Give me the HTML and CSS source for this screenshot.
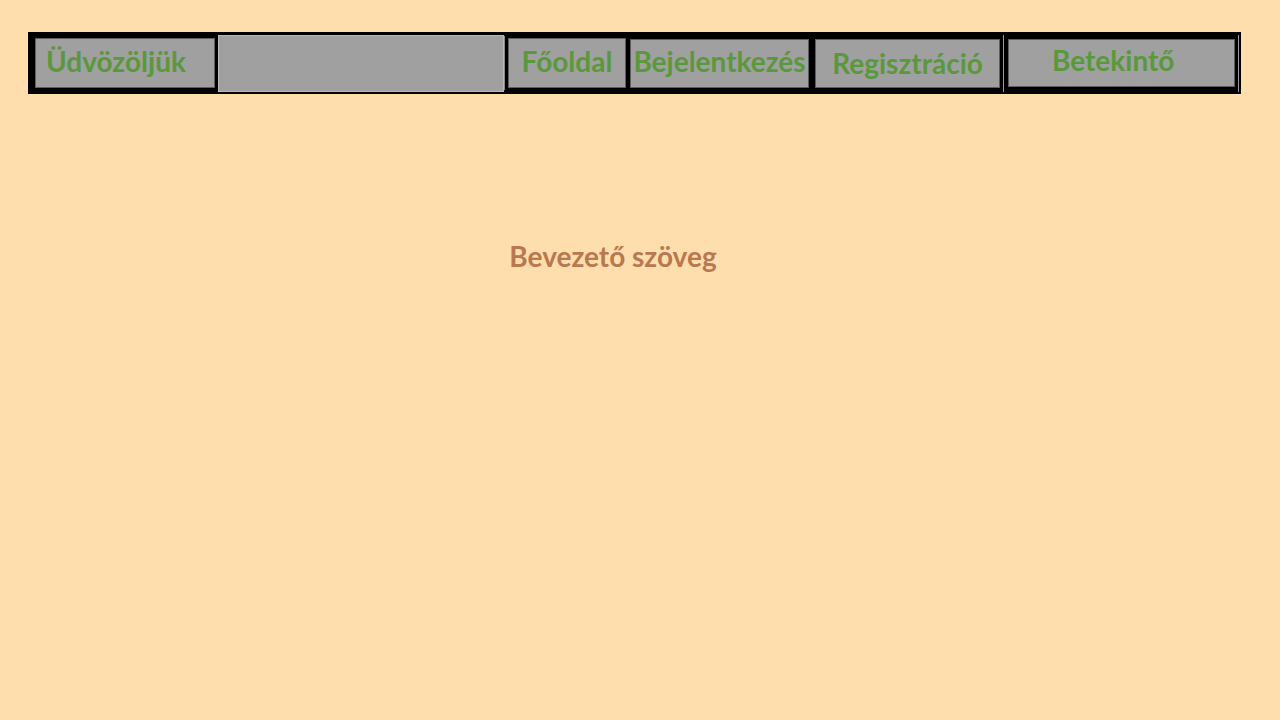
FILE: index.html
```html
<!DOCTYPE html>
<html lang="hu">
<head>
<meta charset="utf-8">
<title>Üdvözöljük</title>
<link rel="stylesheet" href="styles.css">
</head>
<body>
<div class="page">
  <nav class="nav">
    <div class="cell welcome"><span>Üdvözöljük</span></div>
    <div class="cell blank"></div>
    <div class="frame home"><div class="cell"><span>Főoldal</span></div></div>
    <div class="cell login"><span>Bejelentkezés</span></div>
    <div class="cell register"><span>Regisztráció</span></div>
    <div class="sep"></div>
    <div class="cell preview"><span>Betekintő</span></div>
    <div class="sep end"></div>
  </nav>
  <div class="intro">Bevezető szöveg</div>
</div>
</body>
</html>
```
FILE: styles.css
```css
html, body {
  margin: 0;
  padding: 0;
  background: #ffdead;
}
body {
  font-family: "Lato", "Liberation Sans", sans-serif;
  font-weight: 700;
}
.page {
  padding: 32px 0 0 28px;
}
.nav {
  width: 1213px;
  height: 62px;
  box-sizing: border-box;
  background: #000;
  display: flex;
  align-items: center;
  padding: 0 0 0 7px;
}
.cell {
  background: #a0a0a0;
  color: #5a983c;
  font-size: 28px;
  line-height: 1;
  box-sizing: border-box;
  display: flex;
  align-items: center;
  justify-content: center;
  white-space: nowrap;
  padding-bottom: 4px;
}
.welcome {
  width: 180px;
  height: 50px;
  border: 1px solid #5e5e5e;
  justify-content: flex-start;
  padding-left: 10px;
}
.blank {
  width: 286px;
  height: 57px;
  border: 1px solid #b9b9b9;
  margin-left: 3px;
}
.frame {
  background: #000;
  border-left: 1px solid #888;
  padding: 2px 3px;
}
.home {
  width: 125px;
  box-sizing: border-box;
}
.home .cell {
  height: 50px;
  border: 1px solid #5e5e5e;
}
.login {
  width: 179px;
  height: 49px;
  border: 1px solid #5e5e5e;
  margin-left: 1px;
}
.register {
  width: 185px;
  height: 49px;
  border: 1px solid #5e5e5e;
  margin-left: 6px;
  padding-bottom: 1px;
}
.sep {
  width: 1px;
  height: 57px;
  background: #9a9a9a;
  margin-left: 3px;
}
.preview {
  width: 227px;
  height: 48px;
  border: 1px solid #5e5e5e;
  margin-left: 4px;
  padding-bottom: 7px;
  justify-content: flex-start;
  padding-left: 43px;
}
.sep.end {
  margin-left: 3px;
}
.intro {
  width: 1226px;
  margin-top: 145px;
  margin-left: -28px;
  text-align: center;
  color: #b87850;
  font-size: 28px;
}
```
